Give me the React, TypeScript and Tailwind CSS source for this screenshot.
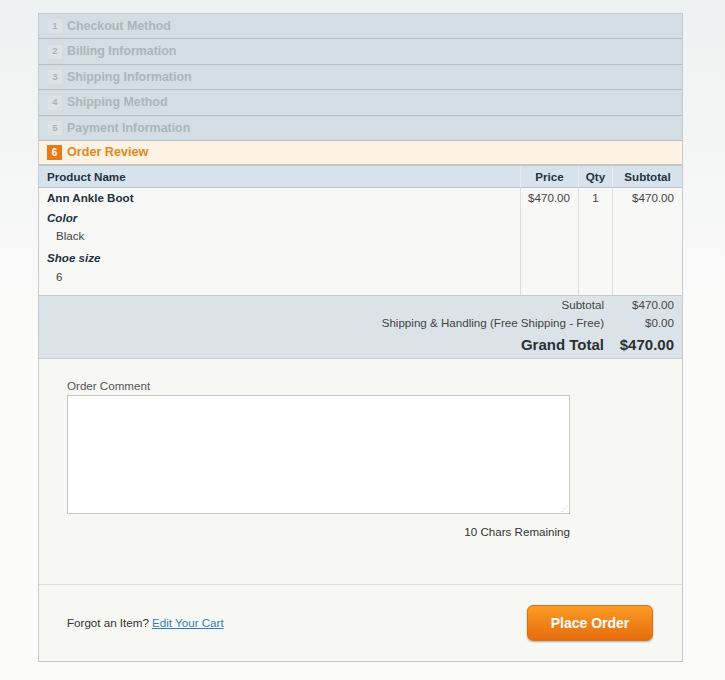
import React from "react"

const steps = [
    { n: 1, label: "Checkout Method", h: "h-[25px]" },
    { n: 2, label: "Billing Information", h: "h-[26px]" },
    { n: 3, label: "Shipping Information", h: "h-[25px]" },
    { n: 4, label: "Shipping Method", h: "h-[26px]" },
    { n: 5, label: "Payment Information", h: "h-[25px]" },
]

function App() {
    return (
        <div className="min-h-[680px] bg-gradient-to-b from-[#eef1f1] via-[#fbfbfa] to-[#fbfbfa] pt-[13px] pl-[38px] font-['Liberation_Sans',Arial,sans-serif] text-[11.6px] text-[#333]">
            <div className="w-[645px] border border-[#c4cacd] bg-[#f7f7f4]">
                {/* Steps */}
                {steps.map((s) => (
                    <div
                        key={s.n}
                        className={`${s.h} flex items-center gap-[5px] border-b border-[#b4bdc3] bg-[#d3dde3] pl-[9px]`}
                    >
                        <span className="flex h-[14px] w-[14px] items-center justify-center bg-[#dbe3e8] text-[9.5px] font-bold text-[#a9b4ba]">
                            {s.n}
                        </span>
                        <span className="text-[12.4px] font-bold text-[#aab5bc]">{s.label}</span>
                    </div>
                ))}
                <div className="flex h-[25px] items-center gap-[5px] border-b-2 border-[#c3c6c6] bg-[#fdf3e5] pl-[8px]">
                    <span className="flex h-[15px] w-[15px] items-center justify-center bg-[#e8791b] text-[10px] font-bold text-white">
                        6
                    </span>
                    <span className="text-[12.6px] font-bold text-[#e6861c]">Order Review</span>
                </div>

                {/* Table */}
                <div className="grid grid-cols-[481px_58px_34px_1fr]">
                    <div className="flex h-[22px] items-center border-b border-[#b7c4ce] bg-[#d6e2ec] pl-[8px] font-bold text-[#243240]">Product Name</div>
                    <div className="flex h-[22px] items-center justify-center border-b border-l border-[#b7c4ce] border-l-[#e6edf2] bg-[#d6e2ec] font-bold text-[#243240]">Price</div>
                    <div className="flex h-[22px] items-center justify-center border-b border-l border-[#b7c4ce] border-l-[#e6edf2] bg-[#d6e2ec] font-bold text-[#243240]">Qty</div>
                    <div className="flex h-[22px] items-center justify-center border-b border-l border-[#b7c4ce] border-l-[#e6edf2] bg-[#d6e2ec] font-bold text-[#243240]">Subtotal</div>

                    <div className="h-[107px] bg-[#f8f8f6] pl-[8px] pt-[1px] leading-[18px]">
                        <div className="font-bold text-[#243240]">Ann Ankle Boot</div>
                        <div className="mt-[2px] font-bold italic text-[#243240]">Color</div>
                        <div className="pl-[9px] text-[#444]">Black</div>
                        <div className="mt-[4px] font-bold italic text-[#243240]">Shoe size</div>
                        <div className="mt-[1px] pl-[9px] text-[#444]">6</div>
                    </div>
                    <div className="border-l border-[#dcdede] bg-[#f8f8f6] pr-[8px] pt-[1px] text-right leading-[18px] text-[#444]">$470.00</div>
                    <div className="border-l border-[#dcdede] bg-[#f8f8f6] pt-[1px] text-center leading-[18px] text-[#444]">1</div>
                    <div className="border-l border-[#dcdede] bg-[#f8f8f6] pr-[8px] pt-[1px] text-right leading-[18px] text-[#444]">$470.00</div>
                </div>

                {/* Totals */}
                <div className="grid h-[64px] grid-cols-[573px_1fr] border-y border-[#c5ccd0] bg-[#dce3e8] text-[#444]">
                    <div className="pr-[8px] text-right leading-[17px]">Subtotal</div>
                    <div className="pr-[8px] text-right leading-[17px]">$470.00</div>
                    <div className="pr-[8px] text-right leading-[19px]">Shipping &amp; Handling (Free Shipping - Free)</div>
                    <div className="pr-[8px] text-right leading-[19px]">$0.00</div>
                    <div className="pr-[8px] text-right text-[15px] font-bold leading-[26px] text-[#2a2f33]">Grand Total</div>
                    <div className="pr-[8px] text-right text-[15px] font-bold leading-[26px] text-[#2a2f33]">$470.00</div>
                </div>

                {/* Comment */}
                <div className="h-[226px] border-b border-[#dcdcda] pl-[28px] pt-[20px]">
                    <div className="leading-[14px] text-[#555]">Order Comment</div>
                    <div className="relative mt-[2px] h-[119px] w-[503px] border border-[#c6c6c6] bg-white">
                        <span className="absolute bottom-[1px] right-[1px] text-[7px] leading-[7px] text-[#bbb]">⋰</span>
                    </div>
                    <div className="mt-[11px] w-[503px] text-right leading-[14px] text-[#333]">10 Chars Remaining</div>
                </div>

                {/* Footer */}
                <div className="flex h-[76px] items-center justify-between pl-[28px] pr-[29px]">
                    <div className="text-[#333]">
                        Forgot an Item?{" "}
                        <a href="#" className="text-[#2f7fc4] underline">
                            Edit Your Cart
                        </a>
                    </div>
                    <button className="h-[36px] w-[126px] rounded-[6px] border border-[#d8721a] bg-gradient-to-b from-[#fb9b24] to-[#e66c0c] text-[14px] font-bold text-white shadow-[0_1px_2px_rgba(0,0,0,0.3)]">
                        Place Order
                    </button>
                </div>
            </div>
        </div>
    )
}

export default App
